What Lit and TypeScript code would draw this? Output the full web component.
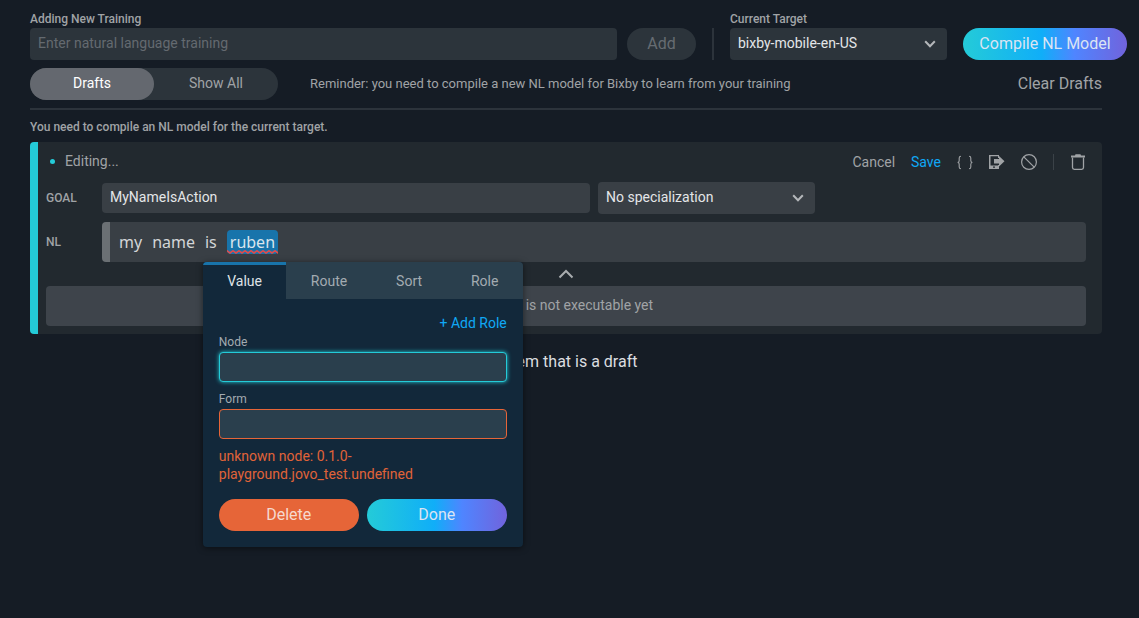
import { LitElement, html, css, svg } from "lit";
import { customElement, property, state } from "lit/decorators.js";
import { classMap } from "lit/directives/class-map.js";

const chevronDown = html`<svg class="chevron" width="12" height="8" viewBox="0 0 12 8" fill="none" aria-hidden="true">
  <path d="M1.2 1.2 6 6.2 10.8 1.2" stroke="#b4b7ba" stroke-width="2" />
</svg>`;

const icons = {
  braces: svg`<path d="M4 2.200Q2.200 2.200 2.200 4V6.500Q2.200 8.500 .6 8.500Q2.200 8.500 2.200 10.500V13Q2.200 14.800 4 14.800M12 2.200Q13.800 2.200 13.800 4V6.500Q13.800 8.500 15.400 8.500Q13.800 8.500 13.800 10.500V13Q13.800 14.800 12 14.800" fill="none" stroke="currentColor" stroke-width="1.100"/>`,
  device: svg`<path fill="currentColor" fill-rule="evenodd" d="M0 1H10V4H9V2.200H1.500V11.500H9V11H10V15H0ZM4 12.500V13.700H6V12.500Z"/><path fill="currentColor" d="M5 5H10V2L15.500 7.300 10 12.500V9.500H5Z"/>`,
  forbid: svg`<g fill="none" stroke="currentColor" stroke-width="1.200"><circle cx="8" cy="8" r="7.400"/><path d="M2.800 2.800 13.200 13.200"/></g>`,
  trash: svg`<path fill="currentColor" d="M1 1.500H5L5.500 .3H10.500L11 1.500H15V3.600H1Z"/><path d="M2.500 3.500V13.500Q2.500 15.300 4.300 15.300H11.700Q13.500 15.300 13.500 13.500V3.500" fill="none" stroke="currentColor" stroke-width="1.300"/>`,
};

const shared = css`
  * {
    box-sizing: border-box;
  }
  button,
  input,
  select {
    margin: 0;
    border: 0;
    font: inherit;
    color: inherit;
    background: none;
  }
  button {
    padding: 0;
    cursor: pointer;
  }
  .pill {
    height: 32px;
    border-radius: 16px;
    font-size: 16px;
    color: #dbe4f3;
  }
  .gradient {
    background: linear-gradient(90deg, #24cbd8, #10aef8 48%, #4f85ff 68%, #7163dc);
  }
`;

@customElement("token-editor")
export class TokenEditor extends LitElement {
  static styles = [
    shared,
    css`
      :host {
        display: block;
        width: 320px;
        background: #12283a;
        border-radius: 4px;
        box-shadow: 0 1px 6px rgba(0, 0, 0, 0.5);
        font: 14px/16px Roboto, "Noto Sans", sans-serif;
        color: #a3abb1;
      }
      .tabs {
        display: flex;
        height: 37px;
        border-radius: 4px 4px 0 0;
        overflow: hidden;
        background: #2a3f4d;
      }
      .tab {
        flex: 1 1 auto;
        padding: 0 22px 2px;
        border-top: 3px solid transparent;
      }
      .tab.active {
        background: #12283a;
        border-top-color: #1874ab;
        color: #dfe3e6;
      }
      .body {
        display: flex;
        flex-direction: column;
        padding: 16px;
      }
      .add-role {
        align-self: flex-end;
        height: 16px;
        margin-bottom: 2px;
        color: #10a8f5;
      }
      .field {
        display: flex;
        flex-direction: column;
        margin-bottom: 8px;
        font-size: 12px;
        line-height: 19px;
      }
      .field input {
        height: 30px;
        padding: 0 8px;
        border: 1px solid #e66538;
        border-radius: 4px;
        background: #2a3f4d;
        outline: none;
      }
      .field input.current {
        border-color: #24cbd8;
        box-shadow: 0 0 4px #24cbd8;
      }
      .error {
        margin: 0 0 16px;
        line-height: 18px;
        color: #e06338;
      }
      .actions {
        display: grid;
        grid-template-columns: 1fr 1fr;
        gap: 8px;
      }
      .delete {
        background: #e66538;
        color: #f6d9ce;
      }
    `,
  ];

  @property() error = "";
  @state() private tab = "Value";

  render() {
    return html`
      <div class="tabs" role="tablist">
        ${["Value", "Route", "Sort", "Role"].map(
          (name) => html`<button
            class=${classMap({ tab: true, active: name === this.tab })}
            role="tab"
            aria-selected=${name === this.tab}
            @click=${() => (this.tab = name)}
          >${name}</button>`
        )}
      </div>
      <div class="body">
        <button class="add-role">+ Add Role</button>
        <div class="field"><label for="node">Node</label><input id="node" class="current" type="text" /></div>
        <div class="field"><label for="form">Form</label><input id="form" type="text" /></div>
        <p class="error">${this.error}</p>
        <div class="actions">
          <button class="pill delete">Delete</button>
          <button class="pill gradient">Done</button>
        </div>
      </div>
    `;
  }
}

@customElement("app-root")
export class AppRoot extends LitElement {
  static styles = [
    shared,
    css`
      :host {
        display: block;
        box-sizing: border-box;
        min-height: 100vh;
        padding: 10px 12px 0 30px;
        background: #151c25;
        color: #a0a3a6;
        font: 14px/18px Roboto, "Noto Sans", sans-serif;
      }
      .top {
        display: flex;
        align-items: flex-end;
      }
      .group {
        display: flex;
        flex-direction: column;
        font-size: 12px;
        font-weight: 500;
      }
      .grow {
        flex: 1;
      }
      .text,
      .select select {
        width: 100%;
        height: 32px;
        padding: 0 8px 2px;
        border-radius: 4px;
        background: #2c343b;
        font-size: 14px;
        font-weight: 400;
        color: #e4e6e8;
      }
      .text::placeholder {
        color: #646a70;
      }
      .select {
        display: grid;
        width: 217px;
        align-items: center;
      }
      .select select {
        grid-area: 1 / 1;
        appearance: none;
      }
      .chevron {
        grid-area: 1 / 1;
        justify-self: end;
        margin-right: 11px;
        pointer-events: none;
      }
      .add {
        width: 69px;
        margin: 0 16px 0 10px;
        background: #2c343b;
        color: #666c72;
      }
      .rule {
        width: 2px;
        height: 32px;
        margin-right: 16px;
        background: #2c333b;
      }
      .compile {
        min-width: 164px;
        margin-left: 16px;
      }
      .main {
        margin-right: 25px;
      }
      .filters {
        display: flex;
        align-items: center;
        padding: 8px 0;
        border-bottom: 2px solid #2c333b;
      }
      .segments {
        display: flex;
        margin-right: 32px;
        border-radius: 16px;
        background: #2c343b;
      }
      .segment {
        width: 124px;
        height: 32px;
        padding-bottom: 2px;
        border-radius: 16px;
      }
      .segment.active {
        background: #64686f;
        color: #fff;
      }
      .reminder {
        flex: 1;
        font-size: 13px;
      }
      .clear {
        font-size: 16px;
      }
      .notice {
        margin: 8px 0 6px;
        font-size: 12px;
        font-weight: 500;
      }
      .card {
        padding: 0 16px 8px 8px;
        border-left: 8px solid #24cbd8;
        border-radius: 4px;
        background: #22292f;
      }
      .card .text,
      .card select {
        background: #393f45;
      }
      .status {
        display: flex;
        align-items: center;
        height: 40px;
        gap: 16px;
      }
      .editing {
        display: flex;
        flex: 1;
        align-items: center;
        gap: 10px;
        padding: 0 0 2px 4px;
      }
      .dot {
        width: 5px;
        height: 5px;
        border-radius: 50%;
        background: #24cbd8;
      }
      .save {
        color: #10a8f5;
      }
      .icon {
        display: flex;
        width: 16px;
        height: 16px;
      }
      .sep {
        width: 1px;
        height: 16px;
        background: #3b4248;
      }
      .row {
        display: grid;
        grid-template-columns: 56px 1fr;
        align-items: center;
        margin-bottom: 8px;
      }
      .row-name {
        font-size: 12px;
        font-weight: 500;
      }
      .goal {
        display: grid;
        grid-template-columns: 488px 217px;
        gap: 8px;
        align-items: center;
      }
      .goal .text {
        height: 30px;
      }
      .phrase-row {
        margin-bottom: 0;
      }
      .phrase {
        display: flex;
        align-items: center;
        gap: 10px;
        height: 40px;
        padding: 0 9px;
        border-left: 8px solid #6b7074;
        border-radius: 4px;
        background: #393f45;
        font: 16px/24px "Noto Sans", sans-serif;
        color: #d3d5d7;
      }
      .token {
        position: relative;
        padding: 0 3px;
        border-radius: 4px;
        background: #1874ab;
        color: #dbe6ee;
      }
      .wave {
        position: absolute;
        left: 0;
        bottom: 0;
        width: 100%;
        height: 4px;
      }
      .popup {
        position: absolute;
        left: -24px;
        top: 32px;
        z-index: 1;
      }
      .collapse {
        display: flex;
        width: 100%;
        height: 24px;
        align-items: center;
        justify-content: center;
      }
      .result {
        height: 40px;
        border-radius: 4px;
        background: #3e444b;
        line-height: 38px;
        text-align: center;
      }
      .count {
        margin: 19px 0 0;
        font-size: 16px;
        text-align: center;
        color: #dcdee0;
      }
    `,
  ];

  @state() private filter = "Drafts";

  private icon(name: keyof typeof icons, label: string) {
    return html`<button class="icon" aria-label=${label}>
      <svg width="16" height="16" viewBox="0 0 16 16">${icons[name]}</svg>
    </button>`;
  }

  render() {
    return html`
      <header class="top">
        <div class="group grow">
          <label for="training">Adding New Training</label>
          <input id="training" class="text" type="text" placeholder="Enter natural language training" />
        </div>
        <button class="pill add">Add</button>
        <div class="rule"></div>
        <div class="group">
          <label for="target">Current Target</label>
          <div class="select">
            <select id="target"><option>bixby-mobile-en-US</option></select>${chevronDown}
          </div>
        </div>
        <button class="pill gradient compile">Compile NL Model</button>
      </header>
      <main class="main">
        <div class="filters">
          <div class="segments">
            ${["Drafts", "Show All"].map(
              (name) => html`<button
                class=${classMap({ segment: true, active: name === this.filter })}
                @click=${() => (this.filter = name)}
              >${name}</button>`
            )}
          </div>
          <span class="reminder">Reminder: you need to compile a new NL model for Bixby to learn from your training</span>
          <button class="clear">Clear Drafts</button>
        </div>
        <p class="notice">You need to compile an NL model for the current target.</p>
        <section class="card">
          <div class="status">
            <div class="editing"><span class="dot"></span>Editing...</div>
            <button>Cancel</button>
            <button class="save">Save</button>
            ${this.icon("braces", "Show JSON")} ${this.icon("device", "Run in simulator")}
            ${this.icon("forbid", "Disable")}
            <span class="sep"></span>
            ${this.icon("trash", "Delete")}
          </div>
          <div class="row">
            <label class="row-name" for="goal">GOAL</label>
            <div class="goal">
              <input id="goal" class="text" type="text" .value=${"MyNameIsAction"} />
              <div class="select">
                <select aria-label="Specialization"><option>No specialization</option></select>${chevronDown}
              </div>
            </div>
          </div>
          <div class="row phrase-row">
            <span class="row-name">NL</span>
            <div class="phrase"><span>my</span> <span>name</span> <span>is</span> <span class="token">ruben<svg class="wave" aria-hidden="true">
              <defs><pattern id="zig" width="6" height="4" patternUnits="userSpaceOnUse">
                <path d="M-3 3 0 .8 3 3 6 .8 9 3" fill="none" stroke="#e24b4b" stroke-width="1.600" />
              </pattern></defs>
              <rect width="100%" height="4" fill="url(#zig)" />
            </svg><token-editor class="popup" error="unknown node: 0.1.0-playground.jovo_test.undefined"></token-editor></span></div>
          </div>
          <button class="collapse" aria-label="Collapse">
            <svg width="16" height="10" viewBox="0 0 16 10" fill="none">
              <path d="M1.500 8.500 8 2 14.500 8.500" stroke="#a9acaf" stroke-width="2" />
            </svg>
          </button>
          <div class="result">Phrase is not executable yet</div>
        </section>
        <p class="count">1 item that is a draft</p>
      </main>
    `;
  }
}
